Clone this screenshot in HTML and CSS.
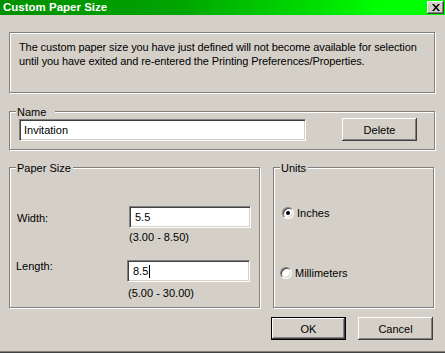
FILE: index.html
```html
<!DOCTYPE html>
<html>
<head>
<meta charset="utf-8">
<link rel="stylesheet" href="styles.css">
</head>
<body>
<div class="window">
  <div class="titlebar">
    <span class="title">Custom Paper Size</span>
    <span class="close">
      <svg width="8" height="7" viewBox="0 0 8 7"><path d="M0 0h2l2 2.5L6 0h2L5 3.5 8 7H6L4 4.5 2 7H0l3-3.5z" fill="#000"/></svg>
    </span>
  </div>
  <div class="content">
    <div class="group info">
      <p class="info-text">The custom paper size you have just defined will not become available for selection until you have exited and re-entered the Printing Preferences/Properties.</p>
    </div>
    <div class="group name-group">
      <span class="legend legend-name">Name</span>
      <div class="edit edit-name">Invitation</div>
      <button class="btn btn-delete">Delete</button>
    </div>
    <div class="groups-row">
      <div class="group paper">
        <span class="legend">Paper Size</span>
        <div class="field-row">
          <span class="label label-width">Width:</span>
          <div class="edit edit-width">5.5</div>
        </div>
        <div class="range range-width">(3.00 - 8.50)</div>
        <div class="field-row row-length">
          <span class="label label-length">Length:</span>
          <div class="edit edit-length">8.5<span class="caret"></span></div>
        </div>
        <div class="range range-length">(5.00 - 30.00)</div>
      </div>
      <div class="group units">
        <span class="legend">Units</span>
        <div class="radio-row row-inches">
          <span class="radio"><span class="dot"></span></span>
          <span class="radio-label">Inches</span>
        </div>
        <div class="radio-row row-mm">
          <span class="radio"></span>
          <span class="radio-label">Millimeters</span>
        </div>
      </div>
    </div>
    <div class="buttons">
      <button class="btn btn-default">OK</button>
      <button class="btn">Cancel</button>
    </div>
  </div>
</div>
</body>
</html>
```
FILE: styles.css
```css
* { box-sizing: border-box; }
html, body { margin: 0; padding: 0; }
body {
  background: #d4d0c8;
  font-family: "Liberation Sans", Arial, sans-serif;
  font-size: 11px;
  line-height: 14px;
  color: #000;
}
.window {
  width: 445px;
  height: 353px;
  display: flex;
  flex-direction: column;
  background: #d4d0c8;
  box-shadow: inset 0 -1px #404040, inset 0 -2px #808080;
}
.titlebar {
  height: 15px;
  display: flex;
  justify-content: space-between;
  align-items: flex-start;
  padding: 0 1px 0 3px;
  background: linear-gradient(to right, #009000 0%, #00a400 40%, #00e000 72%, #00ff00 85%, #00ff00 100%);
}
.title {
  color: #fff;
  font-weight: bold;
  font-size: 11.5px;
  line-height: 13px;
  padding-top: 1px;
}
.close {
  width: 17px;
  height: 13px;
  margin-top: 1px;
  background: #d4d0c8;
  display: flex;
  align-items: center;
  justify-content: center;
  box-shadow: inset -1px -1px #404040, inset 1px 1px #fff, inset -2px -2px #808080;
}
.close svg { display: block; margin-top: -1px; }
.content {
  padding: 17px 10px 0 9px;
}
.group {
  position: relative;
  border: 1px solid #808080;
  box-shadow: inset 1px 1px #fff, 1px 1px #fff;
}
.legend {
  position: absolute;
  top: -6px;
  left: 6px;
  padding: 0 2px 0 1px;
  background: #d4d0c8;
  line-height: 13px;
}
.legend-name { padding-right: 9px; }
.info {
  height: 61px;
  margin-bottom: 18px;
}
.info-text {
  margin: 0;
  padding: 7px 9px 0 9px;
  line-height: 14px;
  letter-spacing: -0.1px;
}
.name-group {
  height: 39px;
  margin-bottom: 17px;
  display: flex;
  align-items: flex-start;
  padding: 6px 0 0 9px;
}
.edit {
  background: #fff;
  height: 22px;
  border-style: solid;
  border-width: 1px;
  border-color: #808080 #fff #fff #808080;
  box-shadow: inset 1px 1px #404040, inset -1px -1px #d4d0c8;
  display: flex;
  align-items: center;
  padding-left: 5px;
}
.edit-name { width: 287px; margin-top: 1px; padding-left: 4px; }
.btn {
  width: 75px;
  height: 23px;
  padding: 0;
  border: none;
  background: #d4d0c8;
  font: inherit;
  color: #000;
  box-shadow: inset -1px -1px #404040, inset 1px 1px #fff, inset -2px -2px #808080;
  display: flex;
  align-items: center;
  justify-content: center;
}
.btn-delete { margin-left: 36px; }
.btn-default {
  box-shadow: inset 0 0 0 1px #000, inset -2px -2px #404040, inset 2px 2px #fff, inset -3px -3px #808080;
}
.groups-row {
  display: flex;
  height: 141px;
  margin-bottom: 9px;
}
.paper {
  width: 251px;
  padding: 38px 0 0 7px;
}
.units {
  width: 161px;
  margin-left: 13px;
  padding-top: 39px;
}
.field-row {
  display: flex;
  align-items: flex-start;
}
.label { width: 112px; }
.label-width { margin-top: 5px; }
.edit-width { width: 122px; }
.range { line-height: 14px; }
.range-width { margin: 2px 0 0 112px; }
.row-length { margin: 16px 0 0 -1px; }
.label-length { width: 111px; margin-top: -1px; }
.edit-length { width: 123px; }
.range-length { margin: 4px 0 0 111px; }
.caret {
  display: inline-block;
  width: 1px;
  height: 13px;
  background: #000;
  margin-left: 1px;
}
.radio-row {
  display: flex;
  align-items: center;
  height: 12px;
}
.row-inches { padding-left: 8px; }
.row-mm { padding-left: 6px; margin-top: 48px; }
.radio {
  width: 12px;
  height: 12px;
  border-radius: 50%;
  background: #fff;
  border: 1px solid;
  border-color: #808080 #fff #fff #808080;
  box-shadow: inset 1px 1px #404040, inset -1px -1px #d4d0c8;
  display: flex;
  align-items: center;
  justify-content: center;
  flex: none;
}
.dot {
  width: 4px;
  height: 4px;
  border-radius: 50%;
  background: #000;
}
.radio-label { margin-left: 3px; line-height: 14px; }
.buttons {
  display: flex;
  justify-content: flex-end;
  gap: 12px;
  padding-right: 2px;
}
```
